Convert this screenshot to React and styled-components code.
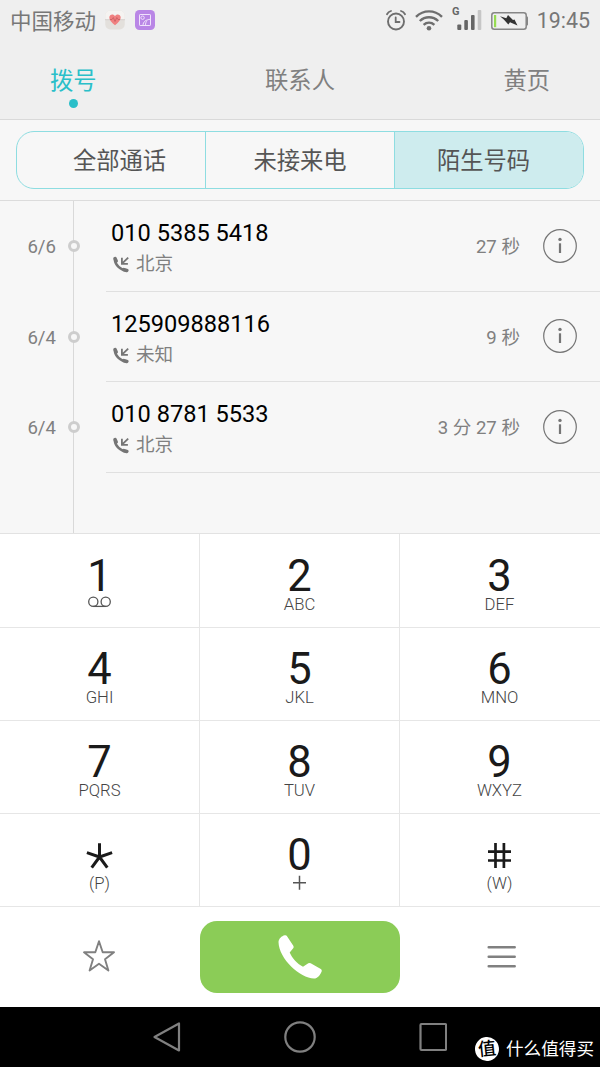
import React, { useState } from "react";
import styled, { createGlobalStyle } from "styled-components";

const GlobalStyle = createGlobalStyle`
	body {
		margin: 0;
		background: #f7f7f7;
		font-family: Roboto, "Noto Sans CJK SC", sans-serif;
	}
	button {
		border: 0;
		padding: 0;
		background: none;
		font: inherit;
		color: inherit;
	}
	svg {
		display: block;
		flex: none;
	}
`;

const Phone = styled.div`
	width: 600px;
	height: 1067px;
	display: flex;
	flex-direction: column;
	overflow: hidden;
`;

const StatusBar = styled.div`
	height: 40px;
	box-sizing: border-box;
	padding: 0 10px;
	display: flex;
	align-items: center;
	justify-content: space-between;
	background: #efefef;
	color: #777;
	font-size: 21.4px;
`;

const StatusGroup = styled.div`
	display: flex;
	align-items: center;
	gap: ${(props) => props.$gap}px;
`;

const Carrier = styled.span`
	margin-right: -1px;
	padding-bottom: 2px;
	font-size: 21.5px;
`;

const Tabs = styled.div`
	height: 79px;
	display: flex;
	justify-content: space-between;
	padding: 0 50px;
	background: #efefef;
	border-bottom: 1px solid #d9d9d9;
`;

const Tab = styled.button`
	display: flex;
	flex-direction: column;
	align-items: center;
	padding-top: 24px;
	font-size: 23.3px;
	line-height: 34px;
	color: ${(props) => (props.$active ? "#2abfc9" : "#808080")};
	&::after {
		content: "";
		width: 9px;
		height: 9px;
		margin-top: 1px;
		border-radius: 50%;
		background: ${(props) => (props.$active ? "#2abfc9" : "transparent")};
	}
`;

const FilterBar = styled.div`
	height: 80px;
	box-sizing: border-box;
	padding: 11px 16px 0;
	background: #f7f7f7;
`;

const Filters = styled.div`
	height: 58px;
	box-sizing: border-box;
	display: grid;
	grid-template-columns: 188px 189px 1fr;
	border: 1px solid #8edde1;
	border-radius: 18px;
	overflow: hidden;
`;

const Filter = styled.button`
	padding: ${(props) => props.$pad};
	font-size: 23.3px;
	color: #555;
	background: ${(props) => (props.$active ? "#ceecee" : "transparent")};
	& + & {
		border-left: 1px solid #8edde1;
	}
`;

const CallList = styled.div`
	height: 332px;
	border-top: 1px solid #dcdcdc;
	border-bottom: 1px solid #e2e2e2;
	display: flex;
	flex-direction: column;
	background: #f7f7f7;
`;

const CallRow = styled.div`
	height: 90.6px;
	display: flex;
`;

const CallDate = styled.div`
	width: 56px;
	box-sizing: border-box;
	padding-top: 2px;
	margin-right: 17px;
	display: flex;
	align-items: center;
	justify-content: flex-end;
	font-size: 18.6px;
	color: #808080;
`;

const Rail = styled.div`
	width: 1px;
	margin-left: ${(props) => (props.$empty ? 73 : 0)}px;
	flex: ${(props) => (props.$empty ? 1 : "none")};
	background: #d9d9d9;
	display: flex;
	align-items: center;
	justify-content: center;
`;

const RailDot = styled.div`
	flex: none;
	width: 6px;
	height: 6px;
	border: 3px solid #cdcdcd;
	border-radius: 50%;
	background: #f7f7f7;
`;

const CallBody = styled.div`
	flex: 1;
	margin-left: 32px;
	padding: 0 23px 0 5px;
	display: flex;
	align-items: center;
	border-bottom: 1px solid #e0e0e0;
`;

const CallInfo = styled.div`
	flex: 1;
	padding-top: 6px;
`;

const CallNumber = styled.div`
	font-size: 23.6px;
	line-height: 32px;
	color: #000;
`;

const CallPlace = styled.div`
	display: flex;
	align-items: center;
	gap: 7px;
	padding-left: 2px;
	font-size: 18.6px;
	line-height: 31px;
	color: #808080;
`;

const CallDuration = styled.div`
	margin-right: 23px;
	padding-bottom: 2px;
	font-size: 18.6px;
	color: #808080;
`;

const Keypad = styled.div`
	display: grid;
	grid-template-columns: 200px 200px 200px;
	background: #fff;
`;

const Key = styled.button`
	height: ${(props) => (props.$tall ? 94 : 93)}px;
	box-sizing: border-box;
	border-bottom: 1px solid #e6e6e6;
	padding-top: ${(props) => (props.$tall ? 25 : 24)}px;
	padding-right: ${(props) => (props.$last ? 1 : 0)}px;
	border-right: ${(props) => (props.$last ? 0 : 1)}px solid #e6e6e6;
	display: flex;
	flex-direction: column;
	align-items: center;
`;

const KeyDigit = styled.div`
	height: 36px;
	display: flex;
	align-items: center;
	font-size: 43.5px;
	line-height: 36px;
	color: #1a1a1a;
`;

const KeyLetters = styled.div`
	height: 20px;
	display: flex;
	align-items: center;
	font-size: 16.7px;
	font-weight: 300;
	line-height: 20px;
	color: #444;
`;

const Actions = styled.div`
	height: 100px;
	display: grid;
	grid-template-columns: 197px 206px 197px;
	align-items: center;
	justify-items: center;
	background: #fff;
`;

const CallButton = styled.button`
	width: 200px;
	height: 72px;
	border-radius: 17px;
	background: #8bcc57;
	display: flex;
	align-items: center;
	justify-content: center;
`;

const NavBar = styled.div`
	position: relative;
	height: 60px;
	display: flex;
	align-items: center;
	justify-content: center;
	gap: 103px;
	background: #000;
`;

const Watermark = styled.div`
	position: absolute;
	right: 6px;
	bottom: 5px;
	display: flex;
	align-items: center;
	gap: 7px;
	color: #fff;
	font-size: 17.6px;
	line-height: 26px;
`;

const WatermarkBadge = styled.span`
	width: 24px;
	height: 24px;
	border-radius: 50%;
	background: #fff;
	color: #000;
	font-size: 18px;
	font-weight: 500;
	line-height: 23px;
	text-align: center;
	transform: rotate(-6deg);
`;

const HealthIcon = () => (
	<svg width="20" height="20" viewBox="0 0 20 20">
		<rect x="0.3" y="0.5" width="19.4" height="19" rx="5" fill="#e3e0dc" />
		<path d="M0.3 9.5V5.5a5 5 0 0 1 5-5h9.400a5 5 0 0 1 5 5v4z" fill="#f5f3f1" />
		<path d="M0 9.700h20" stroke="#cfcac6" strokeWidth="0.8" />
		<path d="M10 15.200C6.500 12.500 4.300 10.400 4.300 7.600c0-3.500 4.200-4.300 5.700-1.500 1.500-2.800 5.700-2 5.700 1.500 0 2.800-2.200 4.900-5.700 7.600z" fill="#f08080" />
		<path d="M5 9.500h2l1.300-2 1.700 4 1.800-4 1.200 2h2" fill="none" stroke="#c65c60" strokeWidth="0.8" />
	</svg>
);

const GalleryIcon = () => (
	<svg width="20" height="20" viewBox="0 0 20 20">
		<rect width="20" height="20" rx="4.500" fill="#b986e6" />
		<g fill="none" stroke="#f0e2fc" strokeWidth="1">
			<rect x="4.500" y="4.500" width="11" height="11" rx="0.6" />
			<circle cx="7.600" cy="7.700" r="1.700" />
			<path d="M8 15.500c0-3.800 3-6 7.500-6.200M12 10.500c-1.200 1.700-1.500 3-1.500 5" />
		</g>
	</svg>
);

const AlarmIcon = () => (
	<svg width="20" height="22" viewBox="0 0 20 22" fill="none" stroke="#6e6e6e" strokeLinecap="round">
		<circle cx="10" cy="12.500" r="8" strokeWidth="1.900" />
		<path d="M9.700 8.500v4.500h3.800" strokeWidth="1.800" />
		<path d="M1 5.200Q2.300 2.800 5 2M19 5.200Q17.700 2.800 15 2" strokeWidth="1.800" />
	</svg>
);

const WifiIcon = () => (
	<svg width="28" height="22" viewBox="0 0 28 22" fill="none" stroke="#6e6e6e" strokeWidth="2.400">
		<path d="M1 7.800c7.500-7.200 18.500-7.200 26 0M4.800 12c5.300-5 13.100-5 18.400 0M8.600 15.900c3.200-2.900 7.600-2.900 10.800 0" />
		<circle cx="14" cy="19.300" r="2.300" fill="#6e6e6e" stroke="none" />
	</svg>
);

const SignalIcon = () => (
	<svg width="30" height="30" viewBox="0 0 30 30" fill="#666">
		<text x="0" y="10" fontSize="11" fontWeight="700">G</text>
		<rect x="5.300" y="19.500" width="4" height="5.500" rx="1" />
		<rect x="12.300" y="15" width="3.600" height="10" rx="1" />
		<rect x="19" y="10" width="3.600" height="15" rx="1" />
		<rect x="25.700" y="5" width="3.600" height="20" rx="1" fill="#c6c6c6" />
	</svg>
);

const BatteryIcon = () => (
	<svg width="37" height="20" viewBox="0 0 37 20">
		<rect x="0.800" y="2.800" width="34.400" height="16.400" rx="2.500" fill="none" stroke="#868686" strokeWidth="1.500" />
		<path d="M35.200 6.500h1q0.800 0 0.800 1v7q0 1-0.800 1h-1z" fill="#868686" />
		<rect x="3" y="5" width="2.200" height="12.200" fill="#96dc50" />
		<path d="M9 6.200l6.300 2.100 1.700-3.300 5 5 1.500-.5 3 6-7.500-3.300-1.700 2.300-4.500-5z" fill="#333" />
	</svg>
);

const IncomingIcon = () => (
	<svg width="16" height="17" viewBox="0 0 16 17" fill="none" stroke="#757575">
		<path d="M1.900 3.500C2.200 9 7.500 14.200 13.300 14.400" strokeWidth="2.600" />
		<path d="M2.100 2.700l1 2.300M11 13.700l2.800.7" strokeWidth="3.600" strokeLinecap="round" />
		<path d="M15.200 1.600L9.500 7.200M8.900 1.800v6h6" strokeWidth="1.800" />
	</svg>
);

const InfoIcon = () => (
	<svg width="34" height="34" viewBox="0 0 34 34">
		<circle cx="17" cy="17" r="16.300" fill="none" stroke="#757575" strokeWidth="1.200" />
		<circle cx="17" cy="10.400" r="1.700" fill="#757575" />
		<path d="M17 14.300v9.700" stroke="#757575" strokeWidth="2.200" />
	</svg>
);

const VoicemailIcon = () => (
	<svg width="23" height="18" viewBox="0 0 23 18" fill="none" stroke="#555" strokeWidth="1.300">
		<circle cx="5.300" cy="5.700" r="4.600" />
		<circle cx="17.700" cy="5.700" r="4.600" />
		<path d="M5.300 10.400h12.400" />
	</svg>
);

const StarKeyIcon = () => (
	<svg width="27" height="36" viewBox="0 0 27 36" stroke="#1a1a1a" strokeWidth="3">
		<path d="M13.500 19V5.300M13.500 19L0.900 14.700M13.500 19l12.600-4.300M13.500 19L5.700 29.700M13.500 19l7.800 10.700" />
	</svg>
);

const HashKeyIcon = () => (
	<svg width="23" height="36" viewBox="0 0 23 36" stroke="#1a1a1a" strokeWidth="2.700">
		<path d="M7.500 5v25M15.900 5v25M0 13.700h23M0 22.500h23" />
	</svg>
);

const PlusIcon = () => (
	<svg width="13" height="20" viewBox="0 0 13 20" stroke="#555" strokeWidth="1.500">
		<path d="M6.500 1.800v14M0 8.800h13" />
	</svg>
);

const FavoriteIcon = () => (
	<svg width="34" height="36" viewBox="0 0 34 36">
		<path
			d="M17 2.200l3.700 11 11.300.1-9 7 3.400 11.200L17 24.800l-9.400 6.700L11 20.300l-9-7 11.300-.1z"
			fill="none"
			stroke="#808080"
			strokeWidth="1.900"
			strokeLinejoin="round"
		/>
	</svg>
);

const HandsetIcon = () => (
	<svg width="44" height="44" viewBox="0 0 44 44">
		<path
			d="M.5 7C.8 3.800 3.500 1 6.800.3Q8.300 0 9.200 1.400L15.300 10.800Q16 12 15.200 13.200L11.700 17.500C14 23 19.500 29 25 31.800L30.300 28.200Q31.500 27.600 32.700 28.300L42.800 34Q44.200 35 43.600 36.500C42 40.500 39.500 43.500 36 43.600C22 43 1 24 .5 7z"
			fill="#fff"
		/>
	</svg>
);

const MenuIcon = () => (
	<svg width="30" height="24" viewBox="0 0 30 24" stroke="#808080" strokeWidth="2.500" strokeLinecap="round">
		<path d="M1.700 2.200h26M1.700 11.700h26M1.700 21.200h26" />
	</svg>
);

const BackIcon = () => (
	<svg width="28" height="32" viewBox="0 0 28 32">
		<path d="M26 2.500v27L1.500 16z" fill="none" stroke="#808080" strokeWidth="2.200" strokeLinejoin="round" />
	</svg>
);

const HomeIcon = () => (
	<svg width="32" height="32" viewBox="0 0 32 32">
		<circle cx="16" cy="16" r="14.700" fill="none" stroke="#808080" strokeWidth="2.200" />
	</svg>
);

const RecentIcon = () => (
	<svg width="28" height="30" viewBox="0 0 28 30">
		<rect x="1.500" y="2" width="25.600" height="26" rx="1" fill="none" stroke="#808080" strokeWidth="2.200" />
	</svg>
);

const tabs = ["拨号", "联系人", "黄页"];

// the outer labels sit a little closer to the middle one
const filters = [
	{ name: "全部通话", pad: "0 0 2px 17px" },
	{ name: "未接来电", pad: "0 0 2px 0" },
	{ name: "陌生号码", pad: "0 11px 2px 0" },
];

const calls = [
	{ id: 1, date: "6/6", number: "010 5385 5418", place: "北京", duration: "27 秒" },
	{ id: 2, date: "6/4", number: "125909888116", place: "未知", duration: "9 秒" },
	{ id: 3, date: "6/4", number: "010 8781 5533", place: "北京", duration: "3 分 27 秒" },
];

const keys = [
	{ id: "1", digit: "1", letters: <VoicemailIcon /> },
	{ id: "2", digit: "2", letters: "ABC" },
	{ id: "3", digit: "3", letters: "DEF" },
	{ id: "4", digit: "4", letters: "GHI" },
	{ id: "5", digit: "5", letters: "JKL" },
	{ id: "6", digit: "6", letters: "MNO" },
	{ id: "7", digit: "7", letters: "PQRS" },
	{ id: "8", digit: "8", letters: "TUV" },
	{ id: "9", digit: "9", letters: "WXYZ" },
	{ id: "star", digit: <StarKeyIcon />, letters: "(P)" },
	{ id: "0", digit: "0", letters: <PlusIcon /> },
	{ id: "hash", digit: <HashKeyIcon />, letters: "(W)" },
];

export default function App() {
	const [tab, setTab] = useState("拨号");
	const [filter, setFilter] = useState("陌生号码");

	return (
		<Phone>
			<GlobalStyle />
			<StatusBar>
				<StatusGroup $gap={10}>
					<Carrier>中国移动</Carrier>
					<HealthIcon />
					<GalleryIcon />
				</StatusGroup>
				<StatusGroup $gap={9}>
					<AlarmIcon />
					<WifiIcon />
					<SignalIcon />
					<BatteryIcon />
					<span>19:45</span>
				</StatusGroup>
			</StatusBar>
			<Tabs>
				{tabs.map((name) => (
					<Tab key={name} $active={name === tab} onClick={() => setTab(name)}>
						{name}
					</Tab>
				))}
			</Tabs>
			<FilterBar>
				<Filters>
					{filters.map((item) => (
						<Filter
							key={item.name}
							$pad={item.pad}
							$active={item.name === filter}
							onClick={() => setFilter(item.name)}>
							{item.name}
						</Filter>
					))}
				</Filters>
			</FilterBar>
			<CallList>
				{calls.map((call) => (
					<CallRow key={call.id}>
						<CallDate>{call.date}</CallDate>
						<Rail>
							<RailDot />
						</Rail>
						<CallBody>
							<CallInfo>
								<CallNumber>{call.number}</CallNumber>
								<CallPlace>
									<IncomingIcon />
									{call.place}
								</CallPlace>
							</CallInfo>
							<CallDuration>{call.duration}</CallDuration>
							<InfoIcon />
						</CallBody>
					</CallRow>
				))}
				<Rail $empty />
			</CallList>
			<Keypad>
				{keys.map((key, index) => (
					<Key key={key.id} $tall={index < 3} $last={index % 3 === 2}>
						<KeyDigit>{key.digit}</KeyDigit>
						<KeyLetters>{key.letters}</KeyLetters>
					</Key>
				))}
			</Keypad>
			<Actions>
				<FavoriteIcon />
				<CallButton>
					<HandsetIcon />
				</CallButton>
				<MenuIcon />
			</Actions>
			<NavBar>
				<BackIcon />
				<HomeIcon />
				<RecentIcon />
				<Watermark>
					<WatermarkBadge>值</WatermarkBadge>
					<span>什么值得买</span>
				</Watermark>
			</NavBar>
		</Phone>
	);
}
